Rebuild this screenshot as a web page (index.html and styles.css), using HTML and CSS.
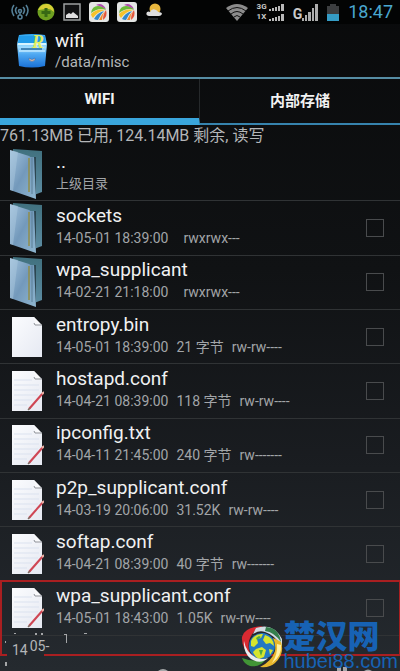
FILE: index.html
```html
<!DOCTYPE html>
<html lang="zh-CN">
    <head>
        <meta charset="utf-8" />
        <title>wifi - /data/misc</title>
        <meta name="viewport" content="width=device-width, initial-scale=1.0" />
        <link rel="stylesheet" href="styles.css">
    </head>
    <body>
        <!-- shared shapes -->
        <svg class="defs" aria-hidden="true">
            <defs>
                <linearGradient id="glass" x1="0" y1="0" x2="1" y2="1">
                    <stop offset="0" stop-color="#a3c3dd" />
                    <stop offset="0.5" stop-color="#7399bb" />
                    <stop offset="1" stop-color="#8fb6d0" />
                </linearGradient>
                <linearGradient id="back" x1="0" y1="0" x2="0" y2="1">
                    <stop offset="0" stop-color="#40707e" />
                    <stop offset="1" stop-color="#5c8ca2" />
                </linearGradient>
                <linearGradient id="paper" x1="0" y1="0" x2="1" y2="1">
                    <stop offset="0" stop-color="#fbfcfe" />
                    <stop offset="1" stop-color="#e6e9f2" />
                </linearGradient>
                <linearGradient id="cabinet" x1="0" y1="0" x2="0" y2="1">
                    <stop offset="0" stop-color="#2ba4ee" />
                    <stop offset="0.4" stop-color="#9fdcff" />
                    <stop offset="0.6" stop-color="#4fa9f2" />
                    <stop offset="1" stop-color="#1a71d6" />
                </linearGradient>
            </defs>
            <symbol id="folder" viewBox="0 0 32 50">
                <path d="M3 0L32 2V43L24 46L3 40Z" fill="url(#back)" />
                <path d="M24 8L26 8V45H24Z" fill="#2c4651" />
                <path d="M0 1L19 7Q21 9 24 8L26 50L0 41Z" fill="url(#glass)" />
                <path d="M0 1L8 3L3 42L0 41Z" fill="#b4cfe4" opacity="0.4" />
                <path d="M19 9V43" stroke="#918e4b" stroke-width="1.5" />
                <path d="M22 9V45" stroke="#5a7e96" stroke-width="1" />
            </symbol>
            <symbol id="file" viewBox="0 0 32 40">
                <path d="M0 0H22L30 8V40H0Z" fill="url(#paper)" />
                <path d="M22 0L23 8L30 9Z" fill="#f9f9fb" />
                <path d="M22 6L23 8H30" fill="none" stroke="#8f9299" stroke-width="1" />
            </symbol>
            <symbol id="text-file" viewBox="0 0 32 40">
                <use href="#file" />
                <path d="M2 9H20M2 14H27M2 19H27M2 24H26M2 29H20M2 34H15" stroke="#dbe2ef" stroke-width="1" />
                <path d="M17 38L31 22" stroke="#cf4654" stroke-width="2" />
                <path d="M16 39L18 37" stroke="#7d6c63" stroke-width="1.5" />
                <path d="M30 23L32 21" stroke="#edb6a8" stroke-width="2" />
            </symbol>
            <symbol id="ball" viewBox="0 0 20 20">
                <rect width="20" height="20" rx="3" fill="#e4e6e4" />
                <path d="M2 11Q3 4 9 4Q15 4 17 8Q10 5 2 11Z" fill="#6dbb38" />
                <path d="M7 3Q13 0 17 7Q12 4 7 3Z" fill="#b04cae" />
                <path d="M17 8Q19 14 14 18Q14 12 17 8Z" fill="#e3563b" />
                <path d="M2 12Q8 6 16 8Q8 10 4 16Q2 14 2 12Z" fill="#f6c32b" />
                <path d="M5 17Q8 11 15 9Q11 13 9 18Q7 18 5 17Z" fill="#3289cd" />
                <path d="M10 18Q12 13 16 9Q13 13 13 18Z" fill="#f08a2c" />
            </symbol>
            <symbol id="bars" viewBox="0 0 15 7">
                <path d="M0 7V5H2V7ZM3 7V4H5V7ZM6 7V3H8V7ZM9 7V2H11V7ZM12 7V0H15V7Z" fill="#b9b9b9" />
            </symbol>
        </svg>

        <div class="screen">
            <div class="status-bar">
                <svg width="18" height="18" viewBox="0 0 18 18" fill="none" stroke="#547f96" stroke-width="1.6">
                    <path d="M3 2Q-1 7 3 13M6 4Q3 7 6 11M15 2Q19 7 15 13M12 4Q15 7 12 11" />
                    <circle cx="9" cy="8" r="1.5" />
                    <circle cx="9" cy="14" r="2" />
                    <path d="M9 9V12" />
                </svg>
                <svg width="18" height="18" viewBox="0 0 18 18">
                    <circle cx="9" cy="9" r="8.5" fill="#6d9f20" />
                    <path d="M1 7Q4 0 11 1Q17 3 17 9Q13 5 8 6Q3 7 1 7Z" fill="#d8cf35" />
                    <path d="M9 5V14M4.500 9.500H13.500" stroke="#376914" stroke-width="3" />
                </svg>
                <svg width="18" height="18" viewBox="0 0 18 18">
                    <rect x="1" y="1" width="16" height="16" fill="#101112" stroke="#9da0a0" stroke-width="1.5" />
                    <path d="M3 15V12L6 10L8 11L10 9L15 13V15Z" fill="#e0e0e0" />
                </svg>
                <svg width="20" height="20"><use href="#ball" /></svg>
                <svg width="20" height="20"><use href="#ball" /></svg>
                <svg width="18" height="18" viewBox="0 0 18 18">
                    <circle cx="10" cy="6" r="5.500" fill="#e7b63d" />
                    <path d="M4 13Q0 12 2 9Q4 8 5 9Q7 5 11 7Q13 8 13 9Q17 9 17 11Q16 13 14 13Z" fill="#dedede" />
                    <path d="M3 16H13" stroke="#45484a" />
                </svg>
                <div class="signals">
                    <svg width="22" height="17" viewBox="0 0 22 17">
                        <path d="M0 4Q11 -4 22 4L11 17Z" fill="#8c8c8c" />
                        <path d="M2 7Q11 0 20 7M5 10Q11 5 17 10M8 13Q11 10 14 13" fill="none" stroke="#111" stroke-width="1" />
                    </svg>
                    <div class="dual-signal">
                        <span>3G</span><svg width="15" height="7"><use href="#bars" /></svg>
                        <span>1X</span><svg width="15" height="7"><use href="#bars" /></svg>
                    </div>
                    <div class="main-signal">
                        <span>G</span>
                        <svg width="16" height="17" viewBox="0 0 16 17">
                            <path d="M0 17V14H2V17ZM3 17V11H5V17ZM6 17V8H9V17ZM10 17V4H12V17ZM13 17V0H16V17Z" fill="#adadad" />
                        </svg>
                    </div>
                    <svg width="12" height="17" viewBox="0 0 12 17">
                        <path d="M3 0H9V2H12V10H0V2H3Z" fill="#3c3e40" />
                        <path d="M0 10H12V17H0Z" fill="#359cc5" />
                    </svg>
                    <time>18:47</time>
                </div>
            </div>

            <header>
                <svg width="30" height="35" viewBox="0 0 30 35">
                    <path d="M2 2Q15 0 28 2L30 11L28 33Q15 36 2 33L0 11Z" fill="url(#cabinet)" />
                    <path d="M2 3H28L29 10H1Z" fill="#219be8" />
                    <path d="M1 11H29" stroke="#d7f4ff" stroke-width="2" />
                    <path d="M4 16H25" stroke="#286c9e" stroke-width="1.5" />
                    <path d="M2 18H28" stroke="#c0e9ff" stroke-width="1.5" />
                    <path d="M12 25Q15 28 18 25V27Q15 30 12 27Z" fill="#dfb8a4" stroke="#376da8" stroke-width="0.500" />
                    <text class="root-mark" x="15" y="15">R</text>
                </svg>
                <div>
                    <h1>wifi</h1>
                    <p>/data/misc</p>
                </div>
            </header>

            <nav class="tabs">
                <a href="#wifi" class="active">WIFI</a>
                <a href="#storage">内部存储</a>
            </nav>

            <p class="usage">761.13MB 已用, 124.14MB 剩余, 读写</p>

            <ul class="files">
                <li>
                    <svg class="folder" width="32" height="50"><use href="#folder" /></svg>
                    <div class="entry"><h2>..</h2><p class="up">上级目录</p></div>
                </li>
                <li>
                    <svg class="folder" width="32" height="50"><use href="#folder" /></svg>
                    <div class="entry">
                        <h2><label for="f1">sockets</label></h2>
                        <p class="dir"><span>14-05-01 18:39:00</span><span>rwxrwx---</span></p>
                    </div>
                    <input type="checkbox" id="f1">
                </li>
                <li>
                    <svg class="folder" width="32" height="50"><use href="#folder" /></svg>
                    <div class="entry">
                        <h2><label for="f2">wpa_supplicant</label></h2>
                        <p class="dir"><span>14-02-21 21:18:00</span><span>rwxrwx---</span></p>
                    </div>
                    <input type="checkbox" id="f2">
                </li>
                <li>
                    <svg class="file" width="32" height="40"><use href="#file" /></svg>
                    <div class="entry">
                        <h2><label for="f3">entropy.bin</label></h2>
                        <p><span>14-05-01 18:39:00</span><span>21 字节</span><span>rw-rw----</span></p>
                    </div>
                    <input type="checkbox" id="f3">
                </li>
                <li>
                    <svg class="file" width="32" height="40"><use href="#text-file" /></svg>
                    <div class="entry">
                        <h2><label for="f4">hostapd.conf</label></h2>
                        <p><span>14-04-21 08:39:00</span><span>118 字节</span><span>rw-rw----</span></p>
                    </div>
                    <input type="checkbox" id="f4">
                </li>
                <li>
                    <svg class="file" width="32" height="40"><use href="#text-file" /></svg>
                    <div class="entry">
                        <h2><label for="f5">ipconfig.txt</label></h2>
                        <p><span>14-04-11 21:45:00</span><span>240 字节</span><span>rw-------</span></p>
                    </div>
                    <input type="checkbox" id="f5">
                </li>
                <li>
                    <svg class="file" width="32" height="40"><use href="#text-file" /></svg>
                    <div class="entry">
                        <h2><label for="f6">p2p_supplicant.conf</label></h2>
                        <p><span>14-03-19 20:06:00</span><span>31.52K</span><span>rw-rw----</span></p>
                    </div>
                    <input type="checkbox" id="f6">
                </li>
                <li>
                    <svg class="file" width="32" height="40"><use href="#text-file" /></svg>
                    <div class="entry">
                        <h2><label for="f7">softap.conf</label></h2>
                        <p><span>14-04-21 08:39:00</span><span>40 字节</span><span>rw-------</span></p>
                    </div>
                    <input type="checkbox" id="f7">
                </li>
                <li class="marked">
                    <svg class="file" width="32" height="40"><use href="#text-file" /></svg>
                    <div class="entry">
                        <h2><label for="f8">wpa_supplicant.conf</label></h2>
                        <p><span>14-05-01 18:43:00</span><span>1.05K</span><span>rw-rw----</span></p>
                    </div>
                    <input type="checkbox" id="f8">
                </li>
            </ul>

            <footer>
                <!-- scraps of the row scrolling in from below -->
                <div class="scraps">
                    <span class="scrap">14</span><span class="scrap high">05-</span>
                </div>
                <svg class="specks" width="400" height="38" viewBox="0 0 400 38" fill="#a4a6a8">
                    <path d="M14 0H16V1H14ZM35 0H37V2H35ZM41 0H43V2H41ZM84 0H87V1H84ZM5 8H6V10H5ZM5 29H7V33H5ZM64 1H67V10H66V2H64Z" />
                    <path d="M158 38Q163 34 168 38ZM337 34H341V38H337ZM343 34H347V38H343ZM364 38Q368 35 372 38Z" />
                </svg>
                <div class="site-mark">
                    <svg width="42" height="44" viewBox="0 0 42 44">
                        <circle cx="21" cy="21" r="13" fill="#2379c3" />
                        <path d="M10 16Q14 8 22 9L20 13L16 14L17 18L13 22L10 21ZM24 10Q33 13 33 21L29 18L25 19L22 15ZM15 24L21 22L25 25L23 32L18 34Q13 31 12 27ZM28 24L32 25L29 30Z" fill="#d5e52f" />
                        <path d="M15 13L18 11L20 12L16 15ZM18 25L22 25L20 31Z" fill="#4da841" />
                        <path d="M22 1Q11 5 8 16Q6 26 12 33Q0 24 1 12Q3 2 22 1Z" fill="#d92a32" />
                        <path d="M15 3Q32 -3 41 14V22Q34 10 24 7Q18 5 12 9Z" fill="#d3dbe2" />
                        <path d="M25 2Q38 3 40 17Q33 7 24 6Z" fill="#347e4d" />
                        <path d="M40 17Q44 29 34 38Q29 43 19 42Q31 36 34 26Q35 19 32 13Q37 15 40 17Z" fill="#e8b72d" />
                        <path d="M40 20Q41 31 31 38Q37 29 36 19Z" fill="#fff1a6" />
                        <path d="M1 33Q14 38 25 34Q19 43 9 41Q3 39 1 33Z" fill="#419536" />
                        <path d="M3 16Q5 28 16 33Q22 35 27 33Q20 40 10 34Q2 28 3 16Z" fill="#e9eef0" />
                    </svg>
                    <div class="site-name"><strong>楚汉网</strong><span>hubei88.com</span></div>
                </div>
            </footer>
        </div>
    </body>
</html>
```
FILE: styles.css
```css
* {
    margin: 0;
    padding: 0;
    box-sizing: border-box;
}
body {
    color: #b4b6b8;
    background-color: #090a0b;
    font-family: Roboto, "Noto Sans CJK SC", sans-serif;
    font-size: 14px;
}
svg {
    flex: none;
}
.defs {
    position: absolute;
    width: 0;
    height: 0;
}
.screen {
    display: flex;
    flex-direction: column;
    min-height: 100vh;
    overflow: hidden;
    background: linear-gradient(#090a0b, #101214 40%, #1a1d21 70%, #252a2f);
}
/* status bar */
.status-bar {
    display: flex;
    align-items: center;
    gap: 8px;
    height: 24px;
    padding: 0 7px 0 11px;
    background-color: #030404;
}
.signals {
    display: flex;
    align-items: center;
    gap: 9px;
    margin-left: auto;
}
.dual-signal {
    display: grid;
    grid-template-columns: auto auto;
    align-items: center;
    gap: 2px;
    font-size: 8px;
    font-weight: bold;
    line-height: 8px;
    color: #c9c9c9;
}
.main-signal {
    display: flex;
    align-items: flex-end;
    font-weight: bold;
    line-height: 14px;
    color: #c9c9c9;
}
time {
    font-size: 18px;
    line-height: 24px;
    color: #4aa7cf;
}
/* title */
header {
    display: flex;
    align-items: center;
    gap: 8px;
    height: 55px;
    padding-left: 17px;
    border-bottom: 2px solid #568da4;
}
h1 {
    font-size: 19px;
    font-weight: normal;
    line-height: 22px;
    color: #f2f2f2;
}
header p {
    font-size: 15px;
    line-height: 20px;
}
.root-mark {
    font-family: "Liberation Serif", serif;
    font-size: 18px;
    font-style: italic;
    font-weight: bold;
    fill: #e2ee63;
}
/* tabs */
.tabs {
    display: grid;
    grid-template-columns: 1fr 1fr;
    height: 46px;
}
.tabs a {
    display: flex;
    align-items: center;
    justify-content: center;
    padding-bottom: 4px;
    font-size: 15px;
    font-weight: bold;
    color: #f2f2f2;
    text-decoration: none;
    border-bottom: 2px solid #3683ad;
}
.tabs a.active {
    padding-bottom: 0;
    border-right: 1px solid #26292b;
    border-bottom: 7px solid #3aa6dc;
}
.usage {
    font-size: 16px;
    line-height: 22px;
    white-space: nowrap;
}
/* file list */
.files {
    display: grid;
    grid-auto-rows: 1fr;
    flex: 1;
    list-style: none;
}
.files li {
    display: flex;
    align-items: center;
    padding: 0 16px 0 10px;
    border-bottom: 1px solid #303335;
}
.files .folder {
    margin-right: 14px;
}
.files .file {
    margin-left: 2px;
    margin-right: 12px;
}
.entry {
    flex: 1;
    min-width: 0;
    padding-bottom: 4px;
}
.entry h2 {
    font-size: 19px;
    font-weight: normal;
    line-height: 24px;
    color: #f0f1f2;
}
.entry p {
    display: flex;
    gap: 8px;
    line-height: 20px;
    color: #a2a5a8;
    white-space: nowrap;
}
.entry .dir {
    gap: 15px;
}
.entry .up {
    font-size: 13px;
}
input[type="checkbox"] {
    appearance: none;
    width: 18px;
    height: 18px;
    border: 1px solid #494b4d;
    cursor: pointer;
}
.files .marked {
    position: relative;
}
.marked::after {
    content: "";
    position: absolute;
    top: -2px;
    right: 0;
    bottom: -21px;
    left: 0;
    border: 2px solid #a91f21;
    border-right-width: 1px;
    pointer-events: none;
}
/* bottom strip */
footer {
    position: relative;
    height: 35px;
}
.scraps {
    position: absolute;
    z-index: 1;
    left: 7px;
    top: 0;
    display: flex;
    align-items: flex-end;
    width: 37px;
    height: 24px;
    padding-left: 5px;
    background-color: #23282d;
}
.scrap {
    line-height: 20px;
}
.scrap.high {
    line-height: 28px;
    margin-left: 2px;
}
.specks {
    position: absolute;
    z-index: 1;
    left: 0;
    bottom: 0;
}
.site-mark {
    position: absolute;
    z-index: 1;
    right: 2px;
    bottom: 0;
    display: flex;
    align-items: center;
    color: #1762b4;
}
.site-name {
    display: flex;
    flex-direction: column;
}
.site-name strong {
    font-size: 32px;
    font-weight: 900;
    line-height: 28px;
}
.site-name span {
    font-family: "Liberation Sans", sans-serif;
    font-size: 20px;
    line-height: 20px;
}
```
